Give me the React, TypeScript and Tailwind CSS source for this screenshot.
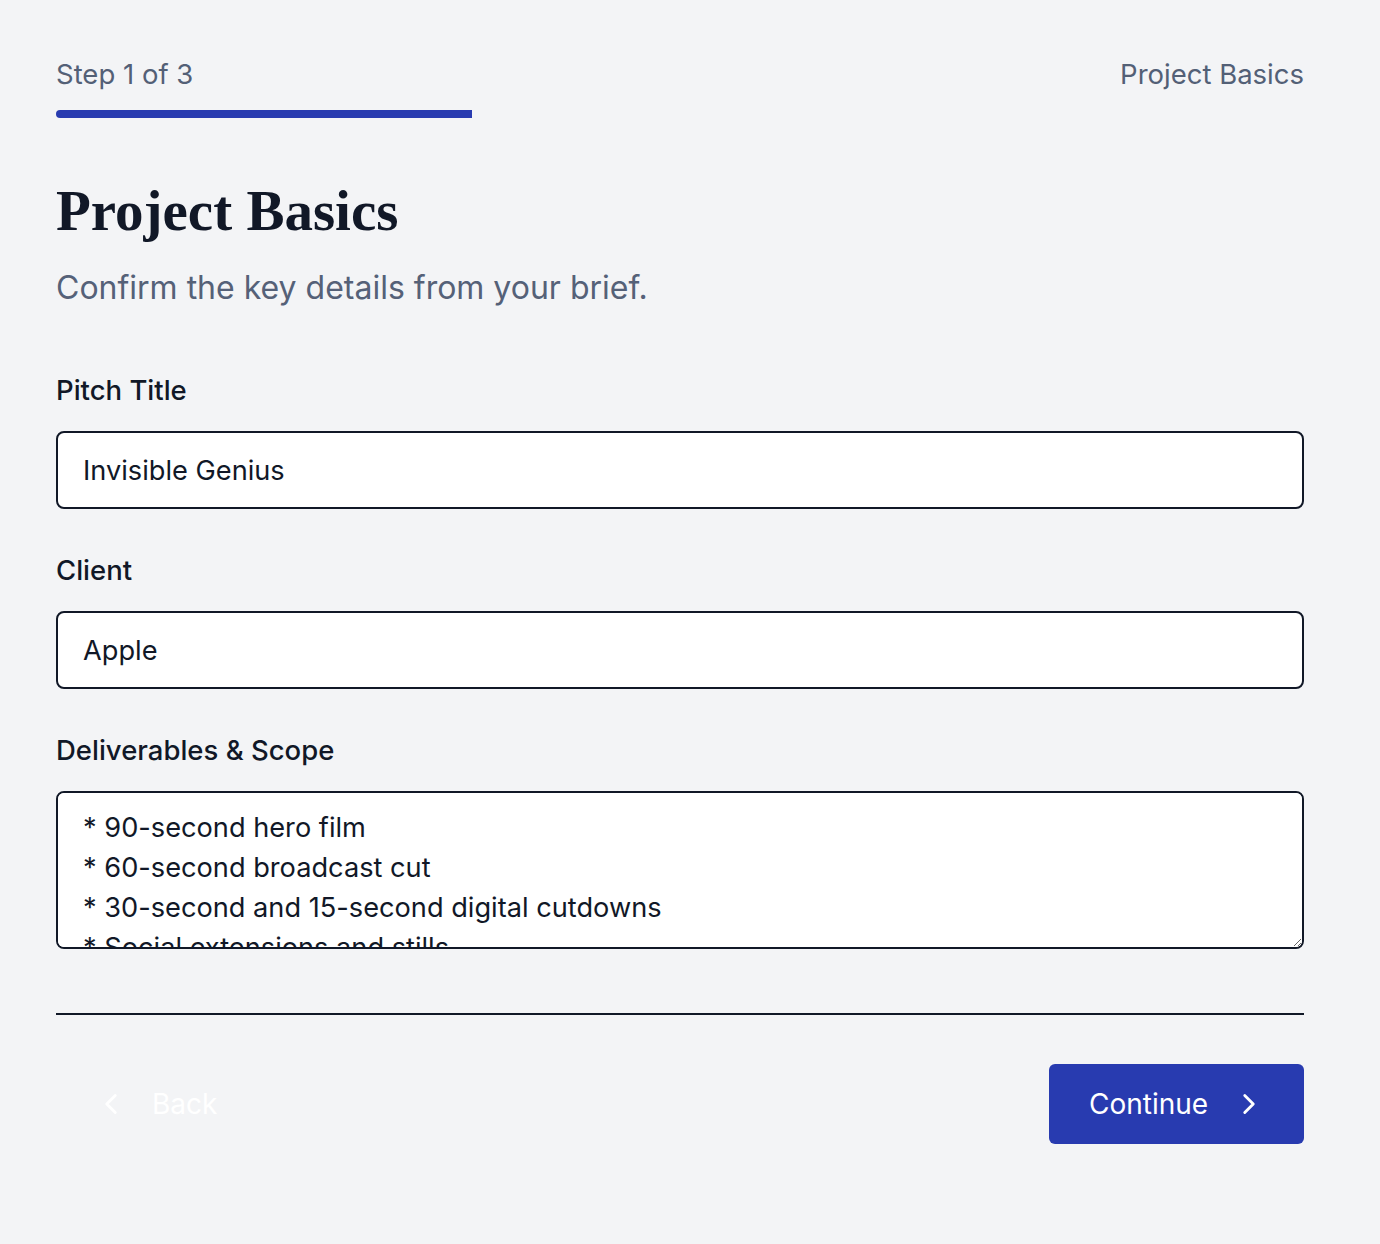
import React, { useState } from 'react';
import { ChevronLeft, ChevronRight } from 'lucide-react';

const sans = { fontFamily: 'Inter, "Liberation Sans", sans-serif' };

function Field({ label, value }: { label: string; value: string }) {
  return (
    <div className="flex flex-col">
      <label className="text-[27.5px] leading-[36px] font-medium text-[#111827]">{label}</label>
      <input
        className="mt-[23px] h-[78px] w-full rounded-[8px] border-2 border-[#111827] bg-white px-[25px] text-[27.2px] text-[#111827] outline-none"
        defaultValue={value}
      />
    </div>
  );
}

export default function App() {
  const [scope, setScope] = useState(
    '* 90-second hero film\n* 60-second broadcast cut\n* 30-second and 15-second digital cutdowns\n* Social extensions and stills'
  );
  const step = 1;
  const total = 3;

  return (
    <div className="min-h-screen bg-[#f3f4f6] px-[56px] pt-[56px] pb-[100px]" style={sans}>
      <div className="w-[1248px]">
        {/* Progress header */}
        <div className="flex items-center justify-between text-[27.5px] leading-[36px] text-[#536076]">
          <span>Step {step} of {total}</span>
          <span>Project Basics</span>
        </div>
        <div className="mt-[18px] h-[8px] w-full overflow-hidden rounded-full">
          <div className="h-full bg-[#283bb0]" style={{ width: `${(step / total) * 100}%` }} />
        </div>

        <h1
          className="mt-[62px] text-[57px] leading-[62px] font-bold text-[#111827]"
          style={{ fontFamily: '"Liberation Serif", "DejaVu Serif", serif' }}
        >
          Project Basics
        </h1>
        <p className="mt-[26px] text-[32px] leading-[40px] text-[#556178]">
          Confirm the key details from your brief.
        </p>

        <div className="mt-[64px] flex flex-col gap-[43px]">
          <Field label="Pitch Title" value="Invisible Genius" />
          <Field label="Client" value="Apple" />
          <div className="flex flex-col">
            <label className="text-[27.5px] leading-[36px] font-medium text-[#111827]">Deliverables &amp; Scope</label>
            <textarea
              className="mt-[23px] h-[158px] w-full rounded-[8px] border-2 border-[#111827] bg-white px-[25px] py-[15px] text-[27.2px] leading-[40px] text-[#111827] outline-none"
              value={scope}
              onChange={(e) => setScope(e.target.value)}
            />
          </div>
        </div>

        <div className="mt-[64px] h-[2px] w-full bg-[#111827]" />

        <div className="mt-[49px] flex items-center justify-between">
          <button className="flex h-[80px] items-center gap-[24px] pl-[38px] pr-[20px] text-[28px] text-white">
            <ChevronLeft className="h-[34px] w-[34px]" strokeWidth={2} />
            Back
          </button>
          <button className="flex h-[80px] w-[255px] items-center gap-[24px] rounded-[6px] bg-[#283bb0] pl-[40px] text-[28px] text-white">
            Continue
            <ChevronRight className="h-[34px] w-[34px]" strokeWidth={2} />
          </button>
        </div>
      </div>
    </div>
  );
}
